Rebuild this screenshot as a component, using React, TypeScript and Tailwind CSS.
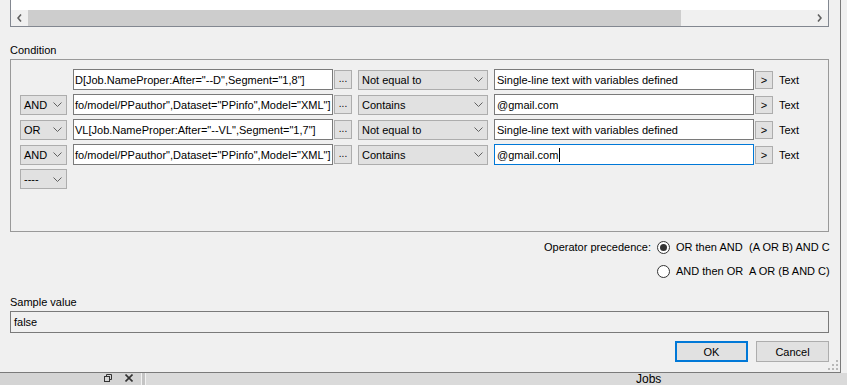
import React from "react";

const Chevron = () => (
  <svg width="9" height="5" viewBox="0 0 9 5" className="shrink-0">
    <path d="M0.5 0.5 L4.5 4.5 L8.5 0.5" fill="none" stroke="#606060" strokeWidth="1" />
  </svg>
);

function Combo({ label, className }: { label: string; className: string }) {
  return (
    <div
      className={`flex h-[20px] items-center justify-between border border-[#adadad] bg-[#e1e1e1] pl-[3px] pr-[4px] ${className}`}
    >
      <span className="leading-[14px] whitespace-nowrap">{label}</span>
      <Chevron />
    </div>
  );
}

type RowProps = {
  op?: string;
  field: string;
  cond: string;
  value: string;
  focused?: boolean;
};

function Row({ op, field, cond, value, focused }: RowProps) {
  return (
    <div className="flex h-[21px] items-center">
      {op ? <Combo label={op} className="w-[47px]" /> : <div className="w-[47px]" />}
      <div className="ml-[6px] flex h-[21px] w-[260px] items-center overflow-hidden whitespace-nowrap border border-[#7a7a7a] bg-white pl-[1px] leading-[14px]">
        {field}
      </div>
      <div className="ml-[1px] flex h-[19px] w-[18px] items-center justify-center border border-[#adadad] bg-[#e1e1e1] pb-[2px] text-[10px] leading-[10px]">
        ...
      </div>
      <Combo label={cond} className="ml-[6px] w-[130px]" />
      <div
        className={`ml-[6px] flex h-[21px] w-[260px] items-center whitespace-nowrap border bg-white pl-[2px] leading-[14px] ${
          focused ? "border-[#0078d7]" : "border-[#7a7a7a]"
        }`}
      >
        <span>{value}</span>
        {focused && <span className="ml-[1px] h-[14px] w-[1px] bg-black" />}
      </div>
      <div className="ml-[1px] flex h-[18px] w-[18px] items-center justify-center border border-[#adadad] bg-[#e1e1e1] leading-[12px]">
        &gt;
      </div>
      <span className="ml-[6px] leading-[14px]">Text</span>
    </div>
  );
}

function Radio({ checked }: { checked?: boolean }) {
  return (
    <div className="flex h-[13px] w-[13px] items-center justify-center rounded-full border border-[#333333] bg-white">
      {checked && <div className="h-[7px] w-[7px] rounded-full bg-[#333333]" />}
    </div>
  );
}

export default function App() {
  return (
    <div className="flex h-[385px] w-[847px] flex-col overflow-hidden bg-[#f0f0f0] font-['Liberation_Sans',Arial,sans-serif] text-[11px] text-black">
      <div className="flex h-[373px]">
        <div className="relative flex h-[373px] w-[841px] flex-col border-b border-r border-[#7a7a7a] pl-[10px] pr-[11px]">
          {/* list box bottom with horizontal scrollbar */}
          <div className="flex h-[27px] flex-col border-x border-b border-[#828790] bg-white">
            <div className="h-[10px]" />
            <div className="flex h-[16px] items-center bg-[#f0f0f0]">
              <div className="flex w-[17px] justify-center">
                <svg width="5" height="8" viewBox="0 0 5 8">
                  <path d="M4 0.5 L1 4 L4 7.5" fill="none" stroke="#606060" strokeWidth="1.6" />
                </svg>
              </div>
              <div className="h-[16px] w-[653px] bg-[#cdcdcd]" />
              <div className="flex-1" />
              <div className="flex w-[17px] justify-center">
                <svg width="5" height="8" viewBox="0 0 5 8">
                  <path d="M1 0.5 L4 4 L1 7.5" fill="none" stroke="#606060" strokeWidth="1.6" />
                </svg>
              </div>
            </div>
          </div>

          <div className="mt-[16px] h-[14px] leading-[14px]">Condition</div>

          <div className="mt-[2px] flex h-[173px] flex-col gap-[4px] border border-[#999999] pl-[9px] pt-[9px]">
            <Row
              field={'D[Job.NameProper:After="--D",Segment="1,8"]'}
              cond="Not equal to"
              value="Single-line text with variables defined"
            />
            <Row
              op="AND"
              field={'fo/model/PPauthor",Dataset="PPinfo",Model="XML"]'}
              cond="Contains"
              value="@gmail.com"
            />
            <Row
              op="OR"
              field={'VL[Job.NameProper:After="--VL",Segment="1,7"]'}
              cond="Not equal to"
              value="Single-line text with variables defined"
            />
            <Row
              op="AND"
              field={'fo/model/PPauthor",Dataset="PPinfo",Model="XML"]'}
              cond="Contains"
              value="@gmail.com"
              focused
            />
            <div className="flex h-[20px] items-center">
              <Combo label="----" className="w-[47px]" />
            </div>
          </div>

          {/* operator precedence */}
          <div className="ml-[533px] mt-[7px] grid grid-cols-[114px_19px_73px_auto] grid-rows-[16px_16px] gap-y-[8px] leading-[14px]">
            <div className="flex items-center justify-end pr-[6px] whitespace-nowrap">Operator precedence:</div>
            <div className="flex items-center">
              <Radio checked />
            </div>
            <div className="flex items-center whitespace-nowrap">OR then AND</div>
            <div className="flex items-center whitespace-nowrap">(A OR B) AND C</div>
            <div />
            <div className="flex items-center">
              <Radio />
            </div>
            <div className="flex items-center whitespace-nowrap">AND then OR</div>
            <div className="flex items-center whitespace-nowrap">A OR (B AND C)</div>
          </div>

          <div className="mt-[16px] h-[14px] leading-[14px]">Sample value</div>
          <div className="mt-[2px] flex h-[22px] items-center border border-[#7a7a7a] pl-[3px] leading-[14px]">
            false
          </div>

          <div className="mt-[8px] flex justify-end gap-[8px]">
            <div className="flex h-[21px] w-[73px] items-center justify-center border-2 border-[#0078d7] bg-[#e1e1e1] leading-[14px]">
              OK
            </div>
            <div className="flex h-[21px] w-[73px] items-center justify-center border border-[#adadad] bg-[#e1e1e1] leading-[14px]">
              Cancel
            </div>
          </div>

          <svg
            className="absolute bottom-[2px] right-[2px]"
            width="10"
            height="10"
            viewBox="0 0 10 10"
          >
            <rect x="8" y="0" width="2" height="2" fill="#b8b8b8" />
            <rect x="4" y="4" width="2" height="2" fill="#b8b8b8" />
            <rect x="8" y="4" width="2" height="2" fill="#b8b8b8" />
            <rect x="0" y="8" width="2" height="2" fill="#b8b8b8" />
            <rect x="4" y="8" width="2" height="2" fill="#b8b8b8" />
            <rect x="8" y="8" width="2" height="2" fill="#b8b8b8" />
          </svg>
        </div>
        <div className="flex-1 bg-[#f0f0f0]" />
      </div>

      {/* underlying window strip */}
      <div className="flex h-[12px] bg-[#d4d4d4]">
        <div className="flex w-[141px] items-start justify-end gap-[13px] pr-[8px] pt-[1px]">
          <svg width="8" height="8" viewBox="0 0 8 8">
            <rect x="0.5" y="2.5" width="5" height="5" fill="none" stroke="#333" strokeWidth="1" />
            <path d="M2.5 2.5 V0.5 H7.5 V5.5 H5.5" fill="none" stroke="#333" strokeWidth="1" />
          </svg>
          <svg width="8" height="8" viewBox="0 0 8 8">
            <path d="M0.5 0.5 L7.5 7.5 M7.5 0.5 L0.5 7.5" stroke="#333" strokeWidth="1.6" />
          </svg>
        </div>
        <div className="w-[5px] border-x border-[#f2f2f2] bg-[#c4c4c4]" />
        <div className="flex-1 bg-[#dadada] pl-[490px] text-[12px] leading-[13px]">Jobs</div>
      </div>
    </div>
  );
}
